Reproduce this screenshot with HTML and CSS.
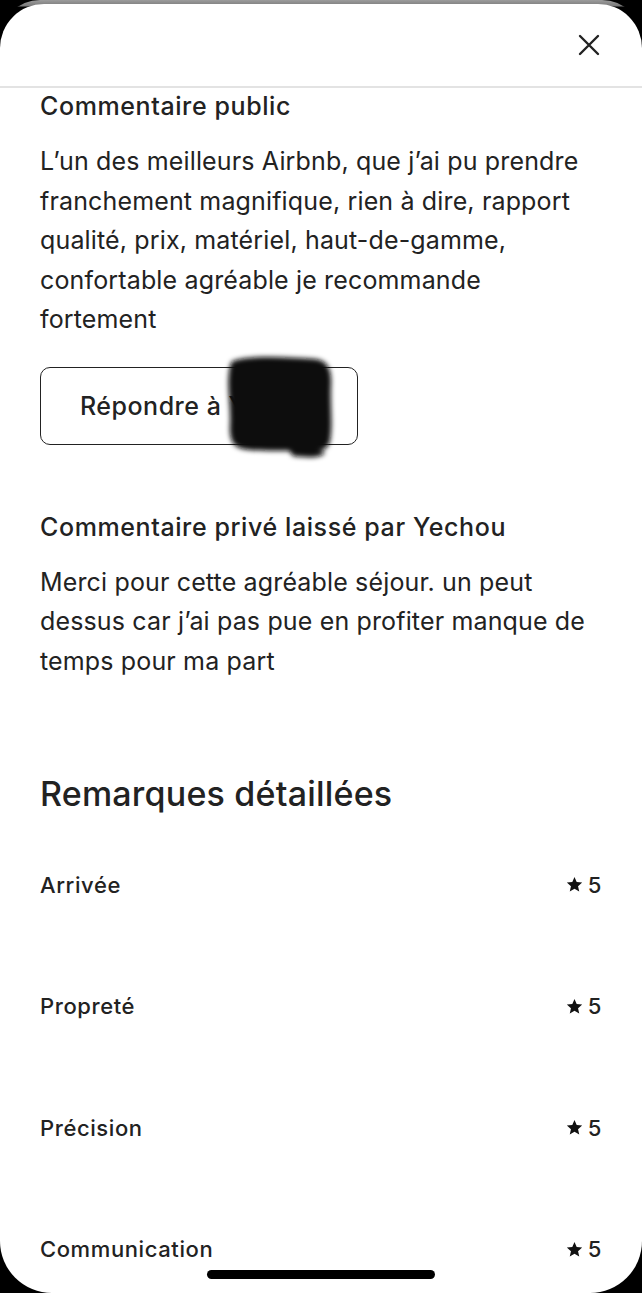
FILE: index.html
```html
<!DOCTYPE html>
<html lang="fr">
<head>
  <meta charset="UTF-8" />
  <meta name="viewport" content="width=device-width, initial-scale=1.0" />
  <title>Commentaire</title>
  <link rel="stylesheet" href="styles.css">
</head>
<body>
  <div class="device">
    <div class="sheet">
      <header class="sheet-header">
        <button class="close" aria-label="Fermer">
          <svg width="22" height="22" viewBox="0 0 22 22"><path d="M2 2 L20 20 M20 2 L2 20" stroke="#222" stroke-width="2.4" stroke-linecap="round" fill="none"/></svg>
        </button>
      </header>

      <main class="content">
        <h3>Commentaire public</h3>
        <p>L’un des meilleurs Airbnb, que j’ai pu prendre franchement magnifique, rien à dire, rapport qualité, prix, matériel, haut-de-gamme, confortable agréable je recommande fortement</p>

        <button class="reply">
          Répondre à Yechou
          <svg class="scribble" width="120" height="112" viewBox="0 0 120 112">
            <defs><filter id="soft"><feGaussianBlur stdDeviation="2.8"/></filter></defs>
            <g filter="url(#soft)">
              <path d="M12 10 C30 4 64 6 94 8 C106 9 111 18 110 34 C109 54 112 74 109 90 C107 100 96 102 78 100 C58 99 38 101 22 98 C12 96 8 88 9 74 C10 56 6 38 8 22 C9 15 9 12 12 10 Z" fill="#0c0c0c"/>
              <path d="M64 94 C78 96 92 98 104 101 C102 107 88 107 72 105 Z" fill="#111"/>
            </g>
          </svg>
        </button>

        <h3 class="private">Commentaire privé laissé par Yechou</h3>
        <p>Merci pour cette agréable séjour. un peut dessus car j’ai pas pue en profiter manque de temps pour ma part</p>

        <h2>Remarques détaillées</h2>
        <ul class="ratings">
          <li><span>Arrivée</span><span class="score"><svg width="17" height="17" viewBox="0 0 24 24"><path d="M12 1.5l3.1 7.1 7.7.7-5.8 5.1 1.7 7.6L12 18l-6.7 4 1.7-7.6L1.2 9.3l7.7-.7z" fill="#111"/></svg>5</span></li>
          <li><span>Propreté</span><span class="score"><svg width="17" height="17" viewBox="0 0 24 24"><path d="M12 1.5l3.1 7.1 7.7.7-5.8 5.1 1.7 7.6L12 18l-6.7 4 1.7-7.6L1.2 9.3l7.7-.7z" fill="#111"/></svg>5</span></li>
          <li><span>Précision</span><span class="score"><svg width="17" height="17" viewBox="0 0 24 24"><path d="M12 1.5l3.1 7.1 7.7.7-5.8 5.1 1.7 7.6L12 18l-6.7 4 1.7-7.6L1.2 9.3l7.7-.7z" fill="#111"/></svg>5</span></li>
          <li><span>Communication</span><span class="score"><svg width="17" height="17" viewBox="0 0 24 24"><path d="M12 1.5l3.1 7.1 7.7.7-5.8 5.1 1.7 7.6L12 18l-6.7 4 1.7-7.6L1.2 9.3l7.7-.7z" fill="#111"/></svg>5</span></li>
        </ul>
      </main>

      <div class="home-bar"></div>
    </div>
  </div>
</body>
</html>
```

FILE: styles.css
```css
* { box-sizing: border-box; }
html, body { margin: 0; padding: 0; }
body {
  background: #000;
  font-family: 'Inter', 'Roboto', sans-serif;
  color: #222;
}
.device {
  width: 642px;
  height: 1293px;
  overflow: hidden;
  background: linear-gradient(#9c9c9c, #7a7a7a 6px, #000 7px);
  border-radius: 40px 40px 0 0;
}
.sheet {
  position: relative;
  height: 1289px;
  margin-top: 4px;
  background: #fff;
  border-radius: 44px 44px 52px 52px;
  overflow: hidden;
}
.sheet-header {
  height: 84px;
  border-bottom: 2px solid #e3e3e3;
  display: flex;
  align-items: center;
  justify-content: flex-end;
  padding: 0 42px 0 0;
}
.close {
  border: none;
  background: none;
  padding: 0;
  width: 22px;
  height: 22px;
  cursor: pointer;
}
.content {
  padding: 3px 40px 0;
}
h3 {
  margin: 0;
  font-size: 25px;
  line-height: 30px;
  font-weight: 500;
  letter-spacing: 0.6px;
}
h3.private { margin-top: 67px; }
p {
  margin: 21px 0 0;
  font-size: 25px;
  line-height: 39.5px;
  font-weight: 400;
  letter-spacing: 0.15px;
}
.reply {
  position: relative;
  margin-top: 27px;
  width: 318px;
  height: 78px;
  border: 1.5px solid #222;
  border-radius: 10px;
  background: #fff;
  text-align: left;
  padding: 0 0 0 39px;
  font-family: inherit;
  font-size: 25px;
  font-weight: 500;
  letter-spacing: 0.5px;
  color: #222;
  white-space: nowrap;
  overflow: visible;
}
.scribble {
  position: absolute;
  left: 180px;
  top: -17px;
}
h2 {
  margin: 91px 0 0;
  font-size: 34px;
  line-height: 44px;
  font-weight: 500;
  letter-spacing: 0.2px;
}
.ratings {
  list-style: none;
  margin: 8px 0 0;
  padding: 0;
}
.ratings li {
  display: flex;
  justify-content: space-between;
  align-items: center;
  padding: 46.75px 0;
  font-size: 22px;
  line-height: 28px;
  font-weight: 500;
  letter-spacing: 0.6px;
}
.score {
  display: flex;
  align-items: center;
  gap: 5px;
}
.home-bar {
  position: absolute;
  left: 207px;
  bottom: 14px;
  width: 228px;
  height: 9px;
  border-radius: 5px;
  background: #000;
}
```
